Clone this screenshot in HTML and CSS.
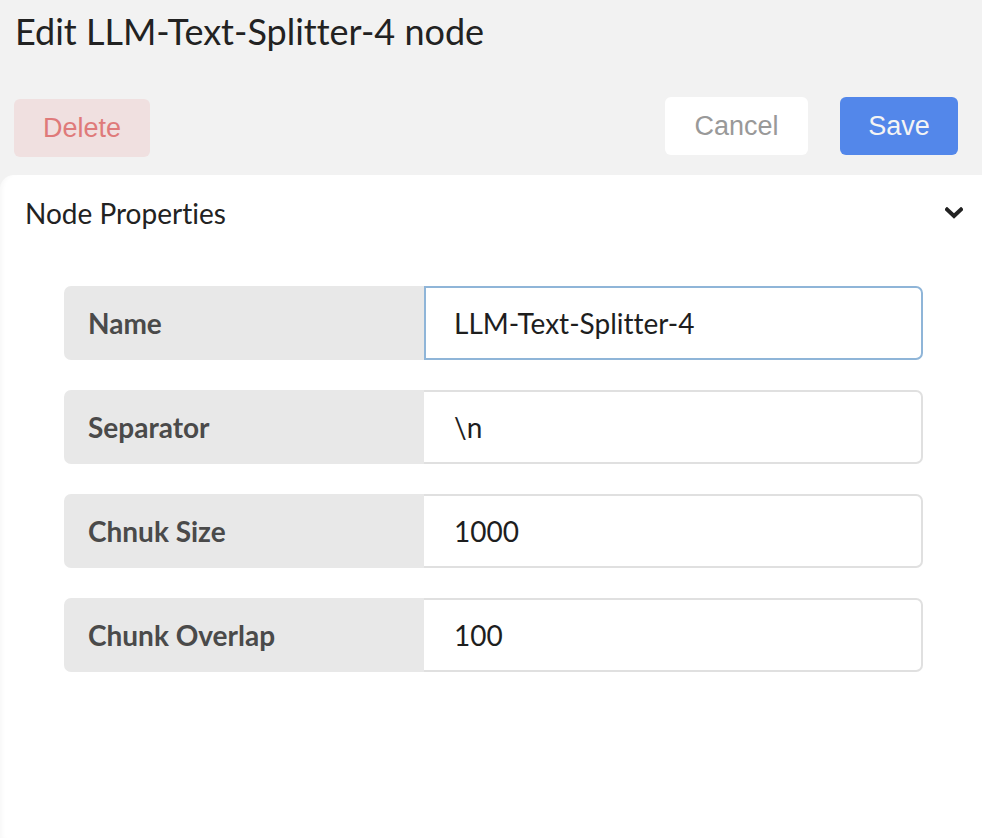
FILE: index.html
```html
<!DOCTYPE html>
<html lang="en">
<head>
<meta charset="utf-8">
<title>Edit node</title>
<link rel="stylesheet" href="styles.css">
</head>
<body>
<div class="header">
  <h1 class="title">Edit LLM-Text-Splitter-4 node</h1>
  <div class="actions">
    <button class="btn btn-delete">Delete</button>
    <div class="spacer"></div>
    <button class="btn btn-cancel">Cancel</button>
    <button class="btn btn-save">Save</button>
  </div>
</div>
<div class="panel">
  <div class="panel-head">
    <span class="panel-title">Node Properties</span>
    <svg class="chevron" width="18" height="12" viewBox="0 0 18 12"><polyline points="2,2.5 9,9 16,2.5" fill="none" stroke="#222" stroke-width="4" stroke-linecap="square"/></svg>
  </div>
  <div class="form">
    <div class="row">
      <div class="label">Name</div>
      <div class="field field-focus">LLM-Text-Splitter-4</div>
    </div>
    <div class="row">
      <div class="label">Separator</div>
      <div class="field">\n</div>
    </div>
    <div class="row">
      <div class="label">Chnuk Size</div>
      <div class="field">1000</div>
    </div>
    <div class="row">
      <div class="label">Chunk Overlap</div>
      <div class="field">100</div>
    </div>
  </div>
</div>
</body>
</html>
```
FILE: styles.css
```css
html, body {
  margin: 0;
  padding: 0;
  height: 100%;
}
body {
  background: #f2f2f2;
  font-family: Lato, "Noto Sans", sans-serif;
  font-variant-ligatures: none;
  display: flex;
  flex-direction: column;
}
.header {
  padding: 0 24px 0 14px;
}
.title {
  margin: 11px 0 0 1px;
  font-size: 36px;
  font-weight: 400;
  color: #222;
  line-height: 40px;
  height: 40px;
}
.actions {
  display: flex;
  align-items: flex-start;
  height: 58px;
  margin-top: 46px;
  gap: 32px;
}
.spacer {
  flex: 1;
}
.btn {
  border: none;
  border-radius: 6px;
  height: 58px;
  font-family: "Liberation Sans", Arial, sans-serif;
  font-size: 27px;
  padding: 0;
}
.btn-delete {
  width: 136px;
  margin-top: 2px;
  background: #f0e0e0;
  color: #df7a7a;
}
.btn-cancel {
  width: 143px;
  background: #fff;
  color: #999;
}
.btn-save {
  width: 118px;
  background: #5387ea;
  color: #f4f4f4;
}
.panel {
  flex: 1;
  margin-top: 20px;
  background: #fff;
  border-top-left-radius: 14px;
  box-shadow: inset 5px 0 5px -3px rgba(0, 0, 0, 0.035);
}
.panel-head {
  display: flex;
  align-items: center;
  justify-content: space-between;
  height: 34px;
  padding: 21px 19px 0 25px;
}
.panel-title {
  font-size: 28px;
  color: #222;
  line-height: 34px;
}
.chevron {
  display: block;
}
.form {
  margin: 56px 59px 0 64px;
  display: flex;
  flex-direction: column;
  gap: 30px;
}
.row {
  display: flex;
  height: 74px;
}
.label {
  width: 336px;
  padding-left: 24px;
  background: #e8e8e8;
  border-radius: 7px 0 0 7px;
  display: flex;
  align-items: center;
  font-weight: 700;
  font-size: 28px;
  color: #4a4a4a;
}
.field {
  flex: 1;
  display: flex;
  align-items: center;
  padding-left: 30px;
  border: 2px solid #e0e0e0;
  border-left: none;
  border-radius: 0 7px 7px 0;
  font-size: 28px;
  color: #1e1e1e;
}
.field-focus {
  border: 2px solid #8fb5d8;
  padding-left: 28px;
}
```
